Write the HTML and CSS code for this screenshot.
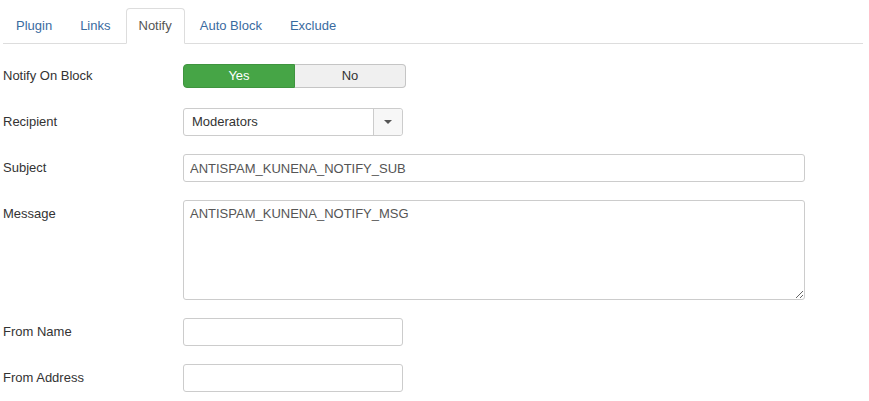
FILE: index.html
```html
<!DOCTYPE html>
<html>
<head>
<meta charset="utf-8">
<link rel="stylesheet" href="styles.css">
</head>
<body>
<div class="page">
  <ul class="tabs">
    <li class="tab"><a>Plugin</a></li>
    <li class="tab"><a>Links</a></li>
    <li class="tab active"><a>Notify</a></li>
    <li class="tab"><a>Auto Block</a></li>
    <li class="tab"><a>Exclude</a></li>
  </ul>
  <form class="form">
    <div class="row">
      <label class="label">Notify On Block</label>
      <div class="controls">
        <div class="toggle">
          <span class="btn btn-yes">Yes</span>
          <span class="btn btn-no">No</span>
        </div>
      </div>
    </div>
    <div class="row">
      <label class="label">Recipient</label>
      <div class="controls">
        <div class="select">
          <span class="select-text">Moderators</span>
          <span class="select-caret"><span class="caret"></span></span>
        </div>
      </div>
    </div>
    <div class="row">
      <label class="label">Subject</label>
      <div class="controls">
        <input class="input input-wide" type="text" value="ANTISPAM_KUNENA_NOTIFY_SUB">
      </div>
    </div>
    <div class="row">
      <label class="label">Message</label>
      <div class="controls">
        <textarea class="input textarea">ANTISPAM_KUNENA_NOTIFY_MSG</textarea>
      </div>
    </div>
    <div class="row">
      <label class="label">From Name</label>
      <div class="controls">
        <input class="input input-small" type="text" value="">
      </div>
    </div>
    <div class="row">
      <label class="label">From Address</label>
      <div class="controls">
        <input class="input input-small" type="text" value="">
      </div>
    </div>
  </form>
</div>
</body>
</html>
```
FILE: styles.css
```css
* { box-sizing: border-box; }
html, body { margin: 0; padding: 0; background: #fff; }
body {
  font-family: "Liberation Sans", Arial, sans-serif;
  font-size: 13px;
  line-height: 18px;
  color: #333;
}
.page {
  width: 863px;
  padding: 8px 0 0 3px;
}
.tabs {
  list-style: none;
  margin: 0 0 18px 0;
  padding: 0;
  display: flex;
  border-bottom: 1px solid #ddd;
}
.tab {
  margin-right: 2px;
  margin-bottom: -1px;
}
.tab a {
  display: block;
  padding: 8px 12px;
  line-height: 18px;
  border: 1px solid transparent;
  border-radius: 4px 4px 0 0;
  color: #3a6b9f;
  cursor: pointer;
}
.tab.active a {
  color: #555;
  background: #fff;
  border-color: #ddd #ddd transparent;
}
.form { margin: 0; }
.row {
  display: flex;
  align-items: flex-start;
  margin-bottom: 18px;
}
.label {
  width: 180px;
  flex: none;
  padding-top: 5px;
  color: #333;
}
.controls { flex: none; }
.toggle {
  display: flex;
  margin: 2px 0;
  width: 223px;
  height: 24px;
}
.btn {
  flex: 1;
  text-align: center;
  padding: 2px 12px;
  line-height: 18px;
  border: 1px solid #c5c5c5;
}
.btn-yes {
  background: #46a546;
  border-color: #3f943f;
  color: #fff;
  border-radius: 4px 0 0 4px;
}
.btn-no {
  background: #f0f0f0;
  border-left: 0;
  color: #333;
  border-radius: 0 4px 4px 0;
}
.select {
  display: flex;
  width: 220px;
  height: 28px;
  border: 1px solid #ccc;
  border-radius: 3px;
  background: #fff;
}
.select-text {
  flex: 1;
  padding: 4px 8px;
  color: #333;
}
.select-caret {
  width: 29px;
  border-left: 1px solid #ccc;
  background: #f7f7f7;
  display: flex;
  align-items: center;
  justify-content: center;
  border-radius: 0 3px 3px 0;
}
.caret {
  width: 0;
  height: 0;
  border-left: 4px solid transparent;
  border-right: 4px solid transparent;
  border-top: 4px solid #555;
}
.input {
  display: block;
  height: 28px;
  margin: 0;
  padding: 4px 6px;
  font-family: "Liberation Sans", Arial, sans-serif;
  font-size: 13px;
  line-height: 18px;
  color: #555;
  background: #fff;
  border: 1px solid #ccc;
  border-radius: 3px;
  outline: none;
}
.input-wide { width: 622px; }
.input-small { width: 220px; }
.textarea {
  width: 622px;
  height: 100px;
  resize: both;
}
```
